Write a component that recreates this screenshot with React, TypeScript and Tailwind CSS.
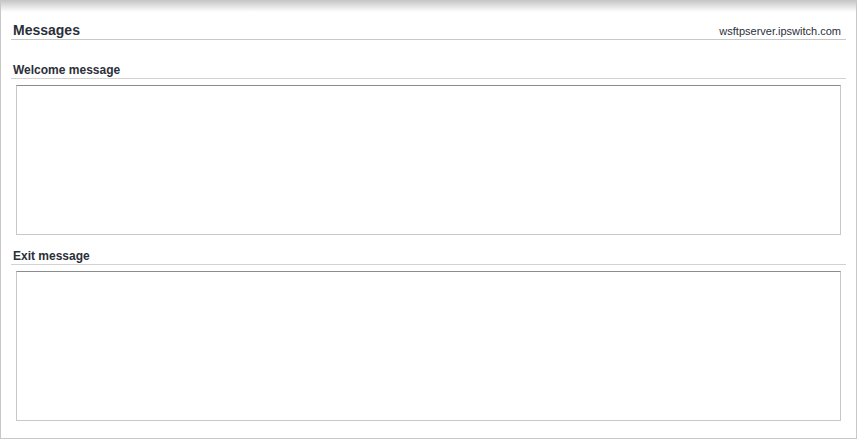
import { useState } from "react";

const font = { fontFamily: '"Liberation Sans", Arial, sans-serif' };

function MessageBox({ label, value, onChange }: { label: string; value: string; onChange: (v: string) => void }) {
  return (
    <div className="flex flex-col">
      <div className="h-[20px] border-b border-[#d2d2d2] pl-[2px] flex items-end">
        <span className="text-[12px] font-bold text-[#2b2f3a] leading-[16px]">{label}</span>
      </div>
      <textarea
        value={value}
        onChange={(e) => onChange(e.target.value)}
        className="block mt-[6px] ml-[5px] w-[825px] h-[150px] resize-none border border-[#c8c8c8] border-t-[#8c8c8c] bg-white outline-none p-1 text-[12px]"
      />
    </div>
  );
}

export default function App() {
  const [welcome, setWelcome] = useState("");
  const [exit, setExit] = useState("");

  return (
    <div
      style={font}
      className="w-[857px] h-[439px] flex flex-col border-l border-r border-b border-[#c8c8c8] bg-[linear-gradient(to_bottom,#c4c4c4,#ffffff_12px)] pt-[19px] pl-[10px] pr-[10px]"
    >
      <div className="h-[21px] border-b border-[#c8c8c8] flex items-end justify-between pl-[2px]">
        <span className="text-[14px] font-bold text-[#2b2f3a] leading-[18px]">Messages</span>
        <span className="text-[11px] text-[#2b2f3a] leading-[16px] pr-[5px]">wsftpserver.ipswitch.com</span>
      </div>
      <div className="mt-[19px]">
        <MessageBox label="Welcome message" value={welcome} onChange={setWelcome} />
      </div>
      <div className="mt-[10px]">
        <MessageBox label="Exit message" value={exit} onChange={setExit} />
      </div>
    </div>
  );
}
